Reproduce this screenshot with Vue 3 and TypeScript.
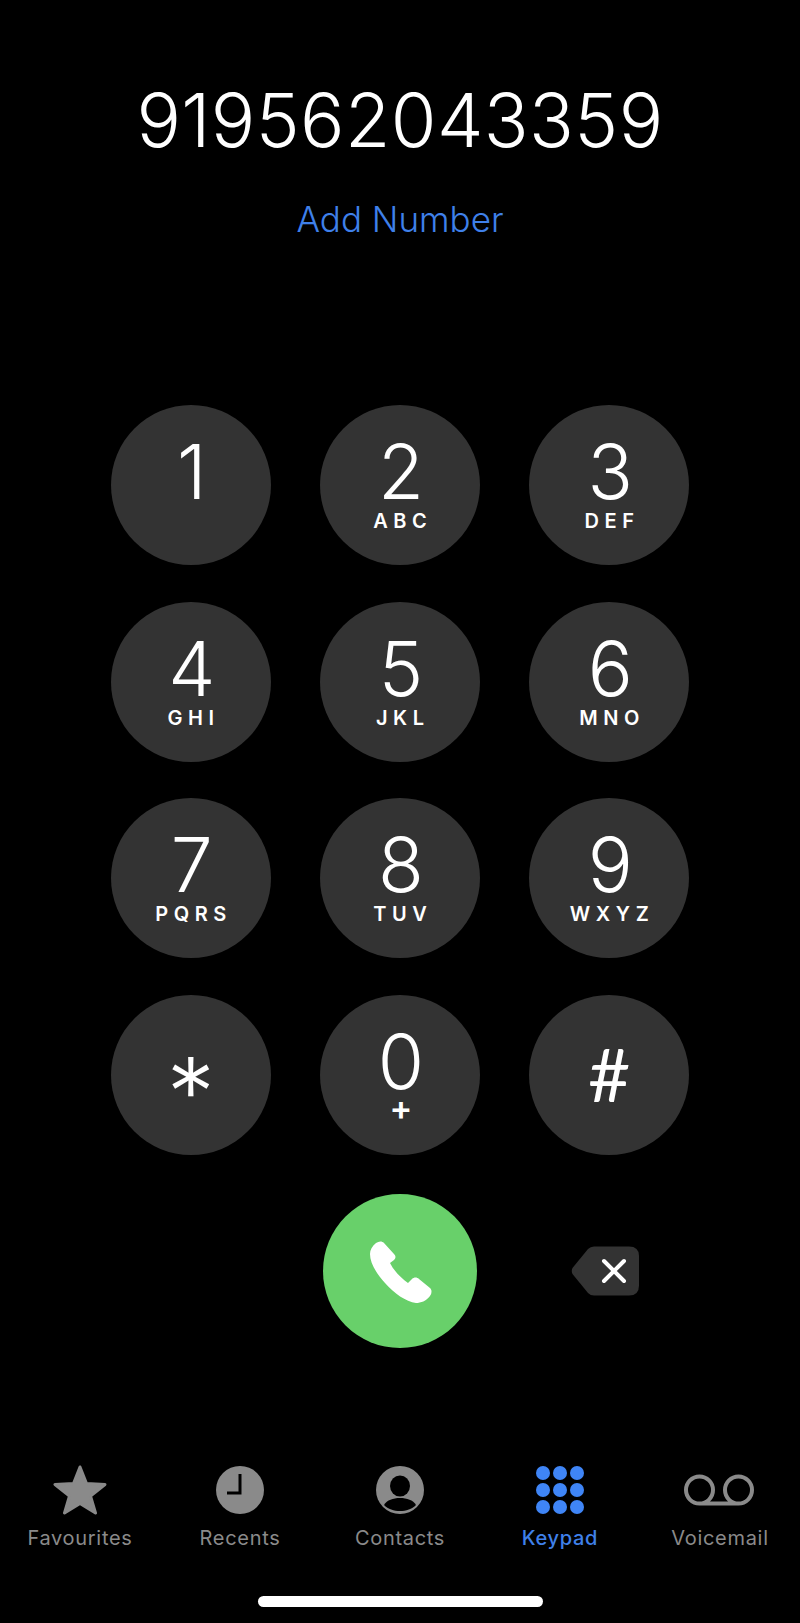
<script setup lang="ts">
interface Key { d: string; l: string; cls?: string }
const keys: Key[] = [
  { d: '1', l: '' }, { d: '2', l: 'ABC' }, { d: '3', l: 'DEF' },
  { d: '4', l: 'GHI' }, { d: '5', l: 'JKL' }, { d: '6', l: 'MNO' },
  { d: '7', l: 'PQRS' }, { d: '8', l: 'TUV' }, { d: '9', l: 'WXYZ' },
  { d: '*', l: '', cls: 'star' }, { d: '0', l: '+', cls: 'zero' }, { d: '#', l: '', cls: 'hash' },
]
const dots: number[][] = []
for (const y of [7, 24, 41]) for (const x of [7, 24, 41]) dots.push([x, y])
</script>

<template>
  <main class="page">
    <div class="number">919562043359</div>
    <div class="add">Add Number</div>

    <section class="keypad">
      <button v-for="k in keys" :key="k.d" class="key" :class="k.cls">
        <span class="digit">{{ k.d }}</span>
        <span v-if="k.l" class="letters">{{ k.l }}</span>
      </button>
    </section>

    <section class="actions">
      <button class="call">
        <svg class="handset" width="62" height="62" viewBox="0 0 62 62">
          <path fill="#fff" d="M6 2C9 0 12 0 14 2L24 13C26 15 26 17 24 19L20 22C24 30 31 37 38 42L42 38C44 36 47 36 49 38L60 47C62 49 62 52 60 55C56 60 51 62 46 62C36 61 24 52 15 42C6 32 0 22 0 13C0 9 2 5 6 2Z" />
        </svg>
      </button>
      <svg class="back" width="68" height="50" viewBox="0 0 68 50">
        <path fill="#333" d="M1.5 22L17 3Q19.5 .5 23 .5L58 .5Q68 .5 68 10L68 39.5Q68 49.5 58 49.5L23 49.5Q19.5 49.5 17 47L1.5 28Q0 25 1.5 22Z" />
        <path stroke="#fff" stroke-width="4" stroke-linecap="round" fill="none" d="M33 15L53 35M53 15L33 35" />
      </svg>
    </section>

    <nav class="tabs">
      <div class="tab">
        <div class="icon">
          <svg width="54" height="50" viewBox="0 0 54 50">
            <path fill="#8a8a8a" stroke="#8a8a8a" stroke-width="3" stroke-linejoin="round" d="M27 2L33.5 18.5L52 19.5L37.5 31L42.5 48L27 38.5L11.5 48L16.5 31L2 19.5L20.5 18.5Z" />
          </svg>
        </div>
        <span>Favourites</span>
      </div>
      <div class="tab">
        <div class="icon">
          <svg width="48" height="48" viewBox="0 0 48 48">
            <circle cx="24" cy="24" r="24" fill="#8a8a8a" />
            <path stroke="#000" stroke-width="3" fill="none" d="M24 8V27H11" />
          </svg>
        </div>
        <span>Recents</span>
      </div>
      <div class="tab">
        <div class="icon">
          <svg width="48" height="48" viewBox="0 0 48 48">
            <circle cx="24" cy="24" r="24" fill="#8a8a8a" />
            <ellipse cx="24" cy="20" rx="10" ry="10.5" fill="#000" />
            <path fill="#000" d="M8 39C11 34 17 32 24 32C31 32 37 34 40 39C36 43 30 45 24 45C18 45 12 43 8 39Z" />
          </svg>
        </div>
        <span>Contacts</span>
      </div>
      <div class="tab active">
        <div class="icon">
          <svg width="48" height="48" viewBox="0 0 48 48">
            <circle v-for="p in dots" :key="p.join()" :cx="p[0]" :cy="p[1]" r="7" fill="#3f85f6" />
          </svg>
        </div>
        <span>Keypad</span>
      </div>
      <div class="tab">
        <div class="icon voicemail">
          <svg width="70" height="32" viewBox="0 0 70 32">
            <path fill="none" stroke="#8a8a8a" stroke-width="4" d="M15 29.5H55M15.5 29.5A13.5 13.5 0 1 1 15.5 2.5A13.5 13.5 0 1 1 15.5 29.5ZM54.5 29.5A13.5 13.5 0 1 1 54.5 2.5A13.5 13.5 0 1 1 54.5 29.5Z" />
          </svg>
        </div>
        <span>Voicemail</span>
      </div>
    </nav>

    <div class="home"></div>
  </main>
</template>

<style>
html, body { margin: 0; background: #000; }
</style>

<style scoped>
.page {
  width: 800px;
  height: 1623px;
  background: #000;
  display: flex;
  flex-direction: column;
  align-items: center;
  padding-top: 93px;
  box-sizing: border-box;
  overflow: hidden;
  font-family: Inter, "Liberation Sans", sans-serif;
  color: #fff;
}
.number {
  font-size: 74px;
  line-height: 54px;
  font-weight: 350;
  letter-spacing: .4px;
  white-space: nowrap;
}
.add {
  margin-top: 57px;
  font-size: 35px;
  line-height: 30px;
  font-weight: 350;
  color: #3f80ea;
}
.keypad {
  margin-top: 171px;
  display: grid;
  grid-template-columns: repeat(3, 160px);
  column-gap: 49.25px;
  row-gap: 36.67px;
}
.key {
  width: 160px;
  height: 160px;
  border: 0;
  border-radius: 50%;
  background: #333;
  color: #fff;
  padding: 39px 0 0;
  font-family: inherit;
  display: flex;
  flex-direction: column;
  align-items: center;
}
.digit {
  font-size: 75px;
  line-height: 56px;
  font-weight: 350;
  margin-left: 2px;
}
.letters {
  margin-top: 14px;
  font-size: 20px;
  line-height: 15px;
  font-weight: 600;
  letter-spacing: 5.6px;
  margin-right: -5.6px;
}
.star .digit { font-size: 96px; line-height: 56px; margin: 30px 0 0; font-weight: 300; }
.hash .digit { font-family: Lato, Inter, sans-serif; font-size: 73px; line-height: 50px; margin: 15px 0 0; font-weight: 400; }
.zero .letters { font-size: 34px; line-height: 15px; margin-top: 10px; letter-spacing: 0; margin-right: 0; margin-left: 2px; font-weight: 600; }
.actions {
  margin-top: 39px;
  width: 578.5px;
  display: grid;
  grid-template-columns: repeat(3, 160px);
  column-gap: 49.25px;
  align-items: center;
}
.call {
  grid-column: 2;
  justify-self: center;
  width: 154px;
  height: 154px;
  border: 0;
  border-radius: 50%;
  background: #68d06a;
  padding: 0;
  display: flex;
  align-items: center;
  justify-content: center;
}
.handset { margin: 3px 0 0 2px; }
.back {
  justify-self: start;
  margin-left: 41.5px;
}
.tabs {
  margin-top: 117px;
  width: 800px;
  display: grid;
  grid-template-columns: repeat(5, 160px);
}
.tab {
  display: flex;
  flex-direction: column;
  align-items: center;
  color: #8a8a8a;
  font-size: 20px;
  line-height: 20px;
  letter-spacing: .7px;
}
.tab.active { color: #3f80ea; font-weight: 450; }
.icon {
  height: 50px;
  margin-bottom: 13px;
  display: flex;
  align-items: center;
  justify-content: center;
}
.voicemail { margin-left: -2px; }
.home {
  margin-top: 48px;
  width: 285px;
  height: 11px;
  border-radius: 6px;
  background: #fff;
}
</style>
